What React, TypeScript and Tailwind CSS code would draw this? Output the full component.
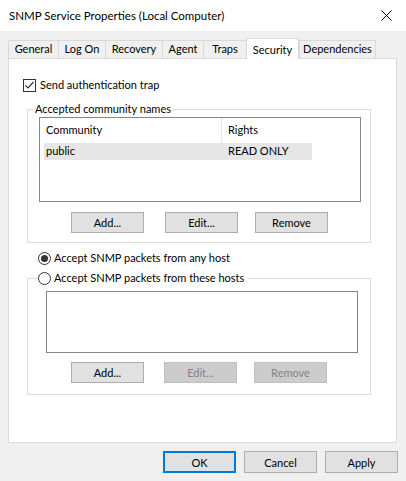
import React from "react";

const tabs = [
  { label: "General", w: "w-[50px]" },
  { label: "Log On", w: "w-[47px]" },
  { label: "Recovery", w: "w-[57px]" },
  { label: "Agent", w: "w-[41px]" },
  { label: "Traps", w: "w-[43px]" },
  { label: "Security", w: "w-[53px]", active: true },
  { label: "Dependencies", w: "w-[77px]" },
];

function WinButton({
  label,
  className = "",
  disabled = false,
  focused = false,
}: {
  label: string;
  className?: string;
  disabled?: boolean;
  focused?: boolean;
}) {
  const look = disabled
    ? "bg-[#cccccc] border border-[#bfbfbf] text-[#838383]"
    : focused
    ? "bg-[#e1e1e1] border-2 border-[#0078d7] text-black"
    : "bg-[#e1e1e1] border border-[#adadad] text-black";
  return (
    <div
      className={`w-[73px] flex items-center justify-center leading-none ${look} ${className}`}
    >
      {label}
    </div>
  );
}

function Checkbox() {
  return (
    <div className="w-[13px] h-[13px] border border-[#333333] bg-white flex items-center justify-center">
      <svg width="11" height="11" viewBox="0 0 11 11">
        <path d="M1.5 5.5 L4 8 L9.5 2" fill="none" stroke="#333333" strokeWidth="1.2" />
      </svg>
    </div>
  );
}

function Radio({ checked }: { checked?: boolean }) {
  return (
    <div className="w-[13px] h-[13px] rounded-full border border-[#333333] bg-white flex items-center justify-center shrink-0">
      {checked && <div className="w-[7px] h-[7px] rounded-full bg-[#333333]" />}
    </div>
  );
}

export default function App() {
  return (
    <div className="w-[406px] h-[481px] bg-[#f0f0f0] text-black text-[11px] font-['Lato','Liberation_Sans',Arial,sans-serif] overflow-hidden">
      {/* Title bar */}
      <div className="h-[31px] bg-white flex items-center justify-between pl-[9px] pr-[14px]">
        <span className="text-[11.5px]">SNMP Service Properties (Local Computer)</span>
        <svg width="11" height="11" viewBox="0 0 11 11">
          <path d="M0.5 0.5 L10.5 10.5 M10.5 0.5 L0.5 10.5" stroke="#000" strokeWidth="1" />
        </svg>
      </div>

      {/* Tabs */}
      <div className="mt-[7px] ml-[8px] h-[20px] flex items-end">
        {tabs.map((t) =>
          t.active ? (
            <div
              key={t.label}
              className={`${t.w} h-[21px] -mb-[1px] relative z-10 bg-white border-t border-l border-r border-[#d9d9d9] flex items-start justify-center pt-[3px]`}
            >
              {t.label}
            </div>
          ) : (
            <div
              key={t.label}
              className={`${t.w} h-[18px] border-t border-l border-[#d9d9d9] last:border-r flex items-center justify-center`}
            >
              {t.label}
            </div>
          )
        )}
      </div>

      {/* Panel */}
      <div className="ml-[8px] w-[389px] h-[385px] border border-[#d9d9d9] bg-white">
        <div className="mt-[19px] pl-[14px] h-[14px] flex items-center gap-[4px] leading-[14px]">
          <Checkbox />
          <span>Send authentication trap</span>
        </div>

        <fieldset className="mt-[10px] ml-[18px] w-[344px] border border-[#dcdcdc] pb-[9px]">
          <legend className="ml-[5px] px-[2px] leading-[14px]">Accepted community names</legend>
          <div className="mt-[1px] ml-[11px] w-[322px] h-[85px] border border-[#828790] bg-white pl-[4px]">
            <div className="flex h-[25px] items-center">
              <div className="w-[178px] h-full flex items-center pl-[2px] border-r border-[#e5e5e5]">Community</div>
              <div className="w-[90px] h-full flex items-center pl-[6px]">Rights</div>
            </div>
            <div className="flex h-[17px] items-center w-[268px] bg-[#e6e6e6]">
              <div className="w-[178px] pl-[2px]">public</div>
              <div className="w-[90px] pl-[6px]">READ ONLY</div>
            </div>
          </div>
          <div className="mt-[10px] flex h-[21px]">
            <WinButton label="Add..." className="ml-[43px]" />
            <WinButton label="Edit..." className="ml-[21px]" />
            <WinButton label="Remove" className="ml-[17px]" />
          </div>
        </fieldset>

        <div className="mt-[8px] pl-[29px] h-[14px] flex items-center gap-[3px] leading-[14px]">
          <Radio checked />
          <span>Accept SNMP packets from any host</span>
        </div>

        <fieldset className="mt-[6px] ml-[18px] w-[344px] border border-[#dcdcdc] pb-[11px]">
          <legend className="ml-[10px] pr-[4px] leading-[14px]">
            <span className="flex items-center gap-[3px]">
              <Radio />
              <span>Accept SNMP packets from these hosts</span>
            </span>
          </legend>
          <div className="mt-[6px] ml-[18px] w-[312px] h-[62px] border border-[#828790] bg-white" />
          <div className="mt-[9px] flex h-[21px]">
            <WinButton label="Add..." className="ml-[43px]" />
            <WinButton label="Edit..." className="ml-[20px]" disabled />
            <WinButton label="Remove" className="ml-[17px]" disabled />
          </div>
        </fieldset>
      </div>

      {/* Dialog buttons */}
      <div className="mt-[8px] h-[22px] flex justify-end gap-[8px] pr-[8px]">
        <WinButton label="OK" focused />
        <WinButton label="Cancel" />
        <WinButton label="Apply" />
      </div>
    </div>
  );
}
